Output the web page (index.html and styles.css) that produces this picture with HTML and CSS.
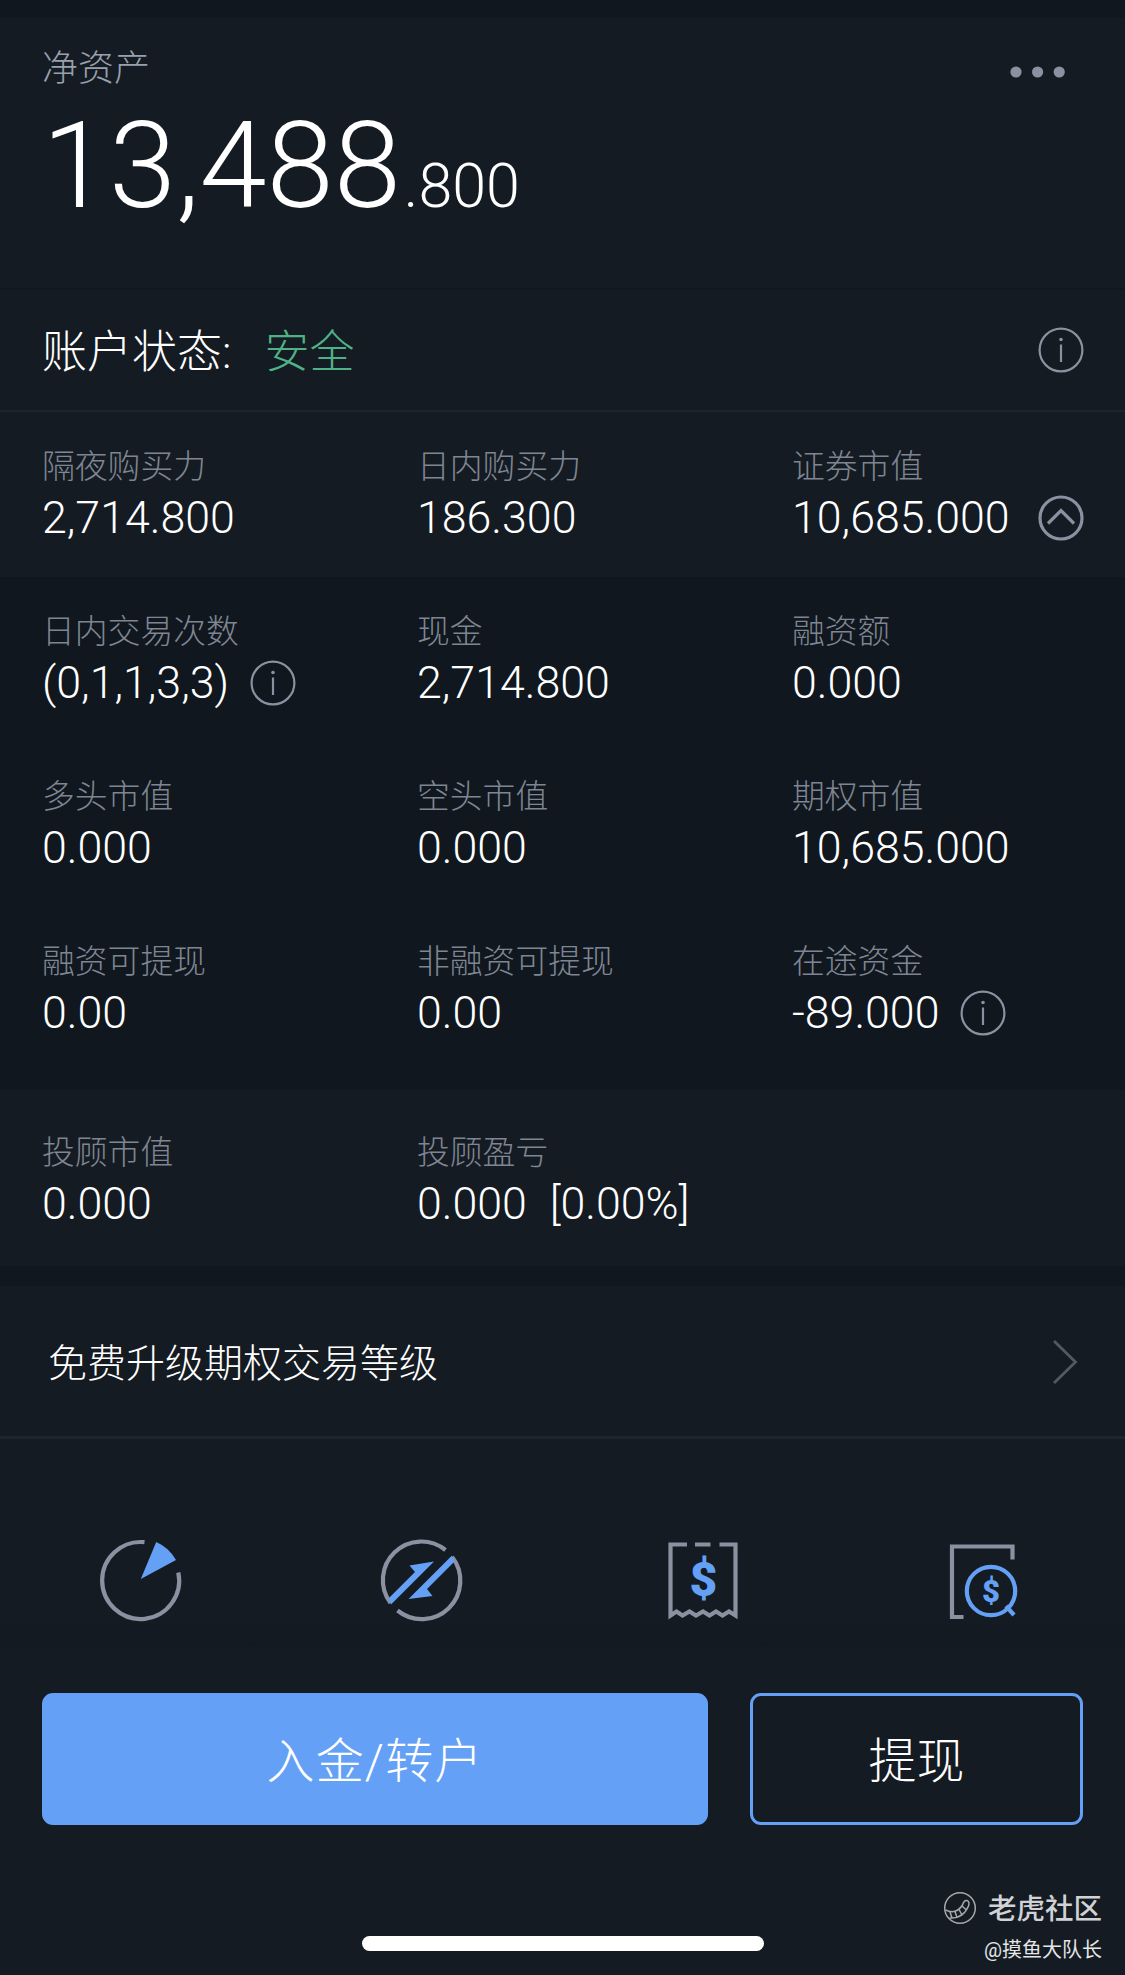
FILE: index.html
```html
<!DOCTYPE html>
<html lang="zh-CN">
<head>
    <meta charset="UTF-8">
    <meta name="viewport" content="width=device-width, initial-scale=1.0">
    <title>账户资产</title>
    <link rel="stylesheet" href="styles.css">
</head>
<body>
    <div class="app">
        <header class="assets">
            <div class="assets-main">
                <div class="assets-label">净资产</div>
                <div class="assets-value">13,488<span class="decimals">.800</span></div>
            </div>
            <svg class="more" width="56" height="12" viewBox="0 0 56 12">
                <circle cx="6" cy="6" r="5.6"/>
                <circle cx="27.6" cy="6" r="5.6"/>
                <circle cx="49.2" cy="6" r="5.6"/>
            </svg>
        </header>

        <section class="status">
            <span class="status-label">账户状态:</span>
            <span class="status-value">安全</span>
            <svg class="info" viewBox="0 0 46 46">
                <circle cx="23" cy="23" r="21.4"/>
                <path d="M23 17.5V35"/>
                <circle class="dot" cx="23" cy="12.5" r="1.8"/>
            </svg>
        </section>

        <section class="grid summary">
            <div class="cell"><div class="label">隔夜购买力</div><div class="value">2,714.800</div></div>
            <div class="cell"><div class="label">日内购买力</div><div class="value">186.300</div></div>
            <div class="cell">
                <div class="label">证券市值</div>
                <div class="value">10,685.000
                    <svg class="toggle" viewBox="0 0 46 46">
                        <circle cx="23" cy="23" r="21"/>
                        <path d="M10 28.5L23 15.5L36 28.5"/>
                    </svg>
                </div>
            </div>
        </section>

        <section class="grid detail">
            <div class="cell">
                <div class="label">日内交易次数</div>
                <div class="value">(0,1,1,3,3)
                    <svg class="info" viewBox="0 0 46 46">
                        <circle cx="23" cy="23" r="21.4"/>
                        <path d="M23 17.5V35"/>
                        <circle class="dot" cx="23" cy="12.5" r="1.8"/>
                    </svg>
                </div>
            </div>
            <div class="cell"><div class="label">现金</div><div class="value">2,714.800</div></div>
            <div class="cell"><div class="label">融资额</div><div class="value">0.000</div></div>
            <div class="cell"><div class="label">多头市值</div><div class="value">0.000</div></div>
            <div class="cell"><div class="label">空头市值</div><div class="value">0.000</div></div>
            <div class="cell"><div class="label">期权市值</div><div class="value">10,685.000</div></div>
            <div class="cell"><div class="label">融资可提现</div><div class="value">0.00</div></div>
            <div class="cell"><div class="label">非融资可提现</div><div class="value">0.00</div></div>
            <div class="cell">
                <div class="label">在途资金</div>
                <div class="value">-89.000
                    <svg class="info" viewBox="0 0 46 46">
                        <circle cx="23" cy="23" r="21.4"/>
                        <path d="M23 17.5V35"/>
                        <circle class="dot" cx="23" cy="12.5" r="1.8"/>
                    </svg>
                </div>
            </div>
        </section>

        <section class="grid advisor">
            <div class="cell"><div class="label">投顾市值</div><div class="value">0.000</div></div>
            <div class="cell wide"><div class="label">投顾盈亏</div><div class="value">0.000<span class="percent">[0.00%]</span></div></div>
        </section>

        <section class="upgrade">
            <span>免费升级期权交易等级</span>
            <svg width="28" height="46" viewBox="0 0 28 46">
                <path d="M3 3L24.5 24L3 45"/>
            </svg>
        </section>

        <nav class="tools">
            <svg viewBox="0 0 90 90">
                <path class="gray" d="M48.5 7.2A38.5 38.5 0 1 0 82.3 37.5"/>
                <path class="fill" d="M44.8 44L60.2 7Q73 12.5 80 25Z"/>
            </svg>
            <svg viewBox="0 0 90 90">
                <path class="gray" d="M68.5 15A38.5 38.5 0 0 0 13.5 68"/>
                <path class="gray" d="M20.5 75.5A38.5 38.5 0 0 0 75.2 22"/>
                <path class="fill" d="M57 26.5L32.5 30.5L38 37L11.5 63.5L14 69.5L42 41.5Z"/>
                <path class="fill" d="M31.5 64L55.5 61L50 54L77.5 26.5L75 20.5L46 49.500Z"/>
            </svg>
            <svg viewBox="0 0 90 90">
                <path class="gray" d="M29 9.5H12.5V80.5L18.5 76.5L24.5 80.5L31.5 76.5L38 80.5L45 76.5L51.5 80.5L58 76.5L64.5 80.5L71 76.5L77.5 80.5V9.5H61.5M37 9.5H52.5"/>
                <text class="dollar" x="45.5" y="61">$</text>
            </svg>
            <svg viewBox="0 0 90 90">
                <path class="gray" d="M24.5 82H13V11.5H73.5V24.5"/>
                <circle class="blue" cx="52" cy="56" r="24.2"/>
                <path class="blue" d="M67 71L75 80"/>
                <text class="dollar small" x="52" y="66.5">$</text>
            </svg>
        </nav>

        <footer class="footer">
            <div class="buttons">
                <button class="btn deposit">入金/转户</button>
                <button class="btn withdraw">提现</button>
            </div>
            <div class="home-bar"></div>
            <div class="watermark">
                <div class="brand">
                    <svg width="34" height="34" viewBox="0 0 34 34">
                        <circle cx="17" cy="17" r="15.3"/>
                        <path d="M2.5 19Q13 24 19.5 14Q21 9 24 9.5Q27 10.5 25.5 15Q20 28 6.5 27"/>
                        <path d="M7 21L9 27M12 20.5L14 26.5M16 18.5L19 24M19 15L23.5 19"/>
                    </svg>
                    <span>老虎社区</span>
                </div>
                <div class="author">@摸鱼大队长</div>
            </div>
        </footer>
    </div>
</body>
</html>
```

FILE: styles.css
```css
* {
    box-sizing: border-box;
}
body {
    margin: 0;
    background-color: #10171e;
    font-family: Roboto, "Noto Sans CJK SC", sans-serif;
    font-weight: 300;
    color: #fff;
}
.app {
    width: 1125px;
    height: 1975px;
    padding-top: 18px;
    display: flex;
    flex-direction: column;
    overflow: hidden;
}
.assets {
    height: 272px;
    padding: 26px 58px 0 42px;
    display: flex;
    justify-content: space-between;
    background-color: #151b22;
    border-bottom: 2px solid #11171e;
}
.assets-label {
    font-size: 36px;
    line-height: 51px;
    color: #99a0ae;
}
.assets-value {
    font-size: 121px;
    line-height: 143px;
}
.decimals {
    margin-left: 3px;
    font-size: 61px;
}
.more {
    margin-top: 22px;
    margin-right: 1px;
    fill: #8b91a0;
}
.status {
    height: 122px;
    padding: 0 41px 0 42px;
    display: flex;
    align-items: center;
    background-color: #151b22;
    border-bottom: 2px solid #1e242b;
    font-size: 45px;
}
.status-label,
.status-value {
    padding-bottom: 3px;
}
.status-value {
    margin-left: 33px;
    color: #4fb286;
}
.info,
.toggle {
    width: 46px;
    height: 46px;
    fill: none;
    stroke: #8b91a0;
    stroke-width: 2.2;
}
.info .dot {
    fill: #8b91a0;
    stroke: none;
}
.toggle {
    stroke-width: 3.2;
}
.status .info {
    margin-left: auto;
}
.grid {
    display: grid;
    grid-template-columns: repeat(3, 375px);
    grid-auto-rows: 165px;
    padding-left: 42px;
}
.summary {
    height: 165px;
    background-color: #151b22;
}
.detail {
    height: 513px;
}
.advisor {
    height: 176px;
    padding-top: 8px;
    background-color: #151b22;
}
.cell {
    padding-top: 30px;
}
.wide {
    grid-column: span 2;
}
.label {
    font-size: 32.8px;
    line-height: 50px;
    color: #7f8693;
}
.value {
    display: flex;
    align-items: center;
    height: 51px;
    font-size: 44.7px;
    white-space: nowrap;
}
.value .info {
    margin-left: 21px;
}
.value .toggle {
    margin-left: 28px;
}
.percent {
    margin-left: 23px;
}
.upgrade {
    height: 153px;
    margin-top: 20px;
    padding: 0 46px 0 48px;
    display: flex;
    align-items: center;
    justify-content: space-between;
    background-color: #151b22;
    border-bottom: 3px solid #1f252d;
    font-size: 39px;
}
.upgrade span {
    padding-bottom: 2px;
}
.upgrade svg {
    fill: none;
    stroke: #525963;
    stroke-width: 2.8;
}
.tools {
    height: 208px;
    padding-top: 96px;
    display: grid;
    grid-template-columns: repeat(4, 1fr);
    justify-items: center;
    background: linear-gradient(#151b22 180px, #131920 208px);
}
.tools svg {
    width: 90px;
    height: 90px;
}
.gray,
.blue {
    fill: none;
    stroke: #8b91a0;
    stroke-width: 4.2;
}
.blue {
    stroke: #64a1f6;
}
.fill,
.dollar {
    fill: #64a1f6;
}
.dollar {
    font-size: 48px;
    font-weight: 900;
    text-anchor: middle;
}
.dollar.small {
    font-size: 31px;
}
.footer {
    position: relative;
    flex: 1;
    padding: 46px 42px 0;
    background-color: #151b22;
}
.buttons {
    display: grid;
    grid-template-columns: 666px 333px;
    gap: 42px;
}
.btn {
    height: 132px;
    padding: 0 0 4px;
    border: 3px solid #64a1f6;
    border-radius: 11px;
    background-color: transparent;
    font-family: inherit;
    font-size: 48px;
    font-weight: 300;
    color: #fff;
}
.deposit {
    background-color: #64a1f6;
    letter-spacing: 1.2px;
}
.home-bar {
    width: 402px;
    height: 15px;
    margin: 111px auto 0;
    border-radius: 8px;
    background-color: #fff;
}
/* sits over the bottom right corner of the page */
.watermark {
    position: absolute;
    right: 23px;
    bottom: 8px;
    text-align: right;
}
.brand {
    display: flex;
    align-items: center;
    justify-content: flex-end;
    gap: 11px;
    height: 42px;
    font-size: 28.5px;
    font-weight: 500;
    color: #d0d2d6;
}
.brand span {
    padding-bottom: 4px;
}
.brand svg {
    fill: none;
    stroke: #a5a9ae;
    stroke-width: 1.5;
}
.author {
    height: 34px;
    margin-top: 4px;
    font-size: 20px;
    line-height: 34px;
    font-weight: 400;
    color: #e4e6e8;
}
```
